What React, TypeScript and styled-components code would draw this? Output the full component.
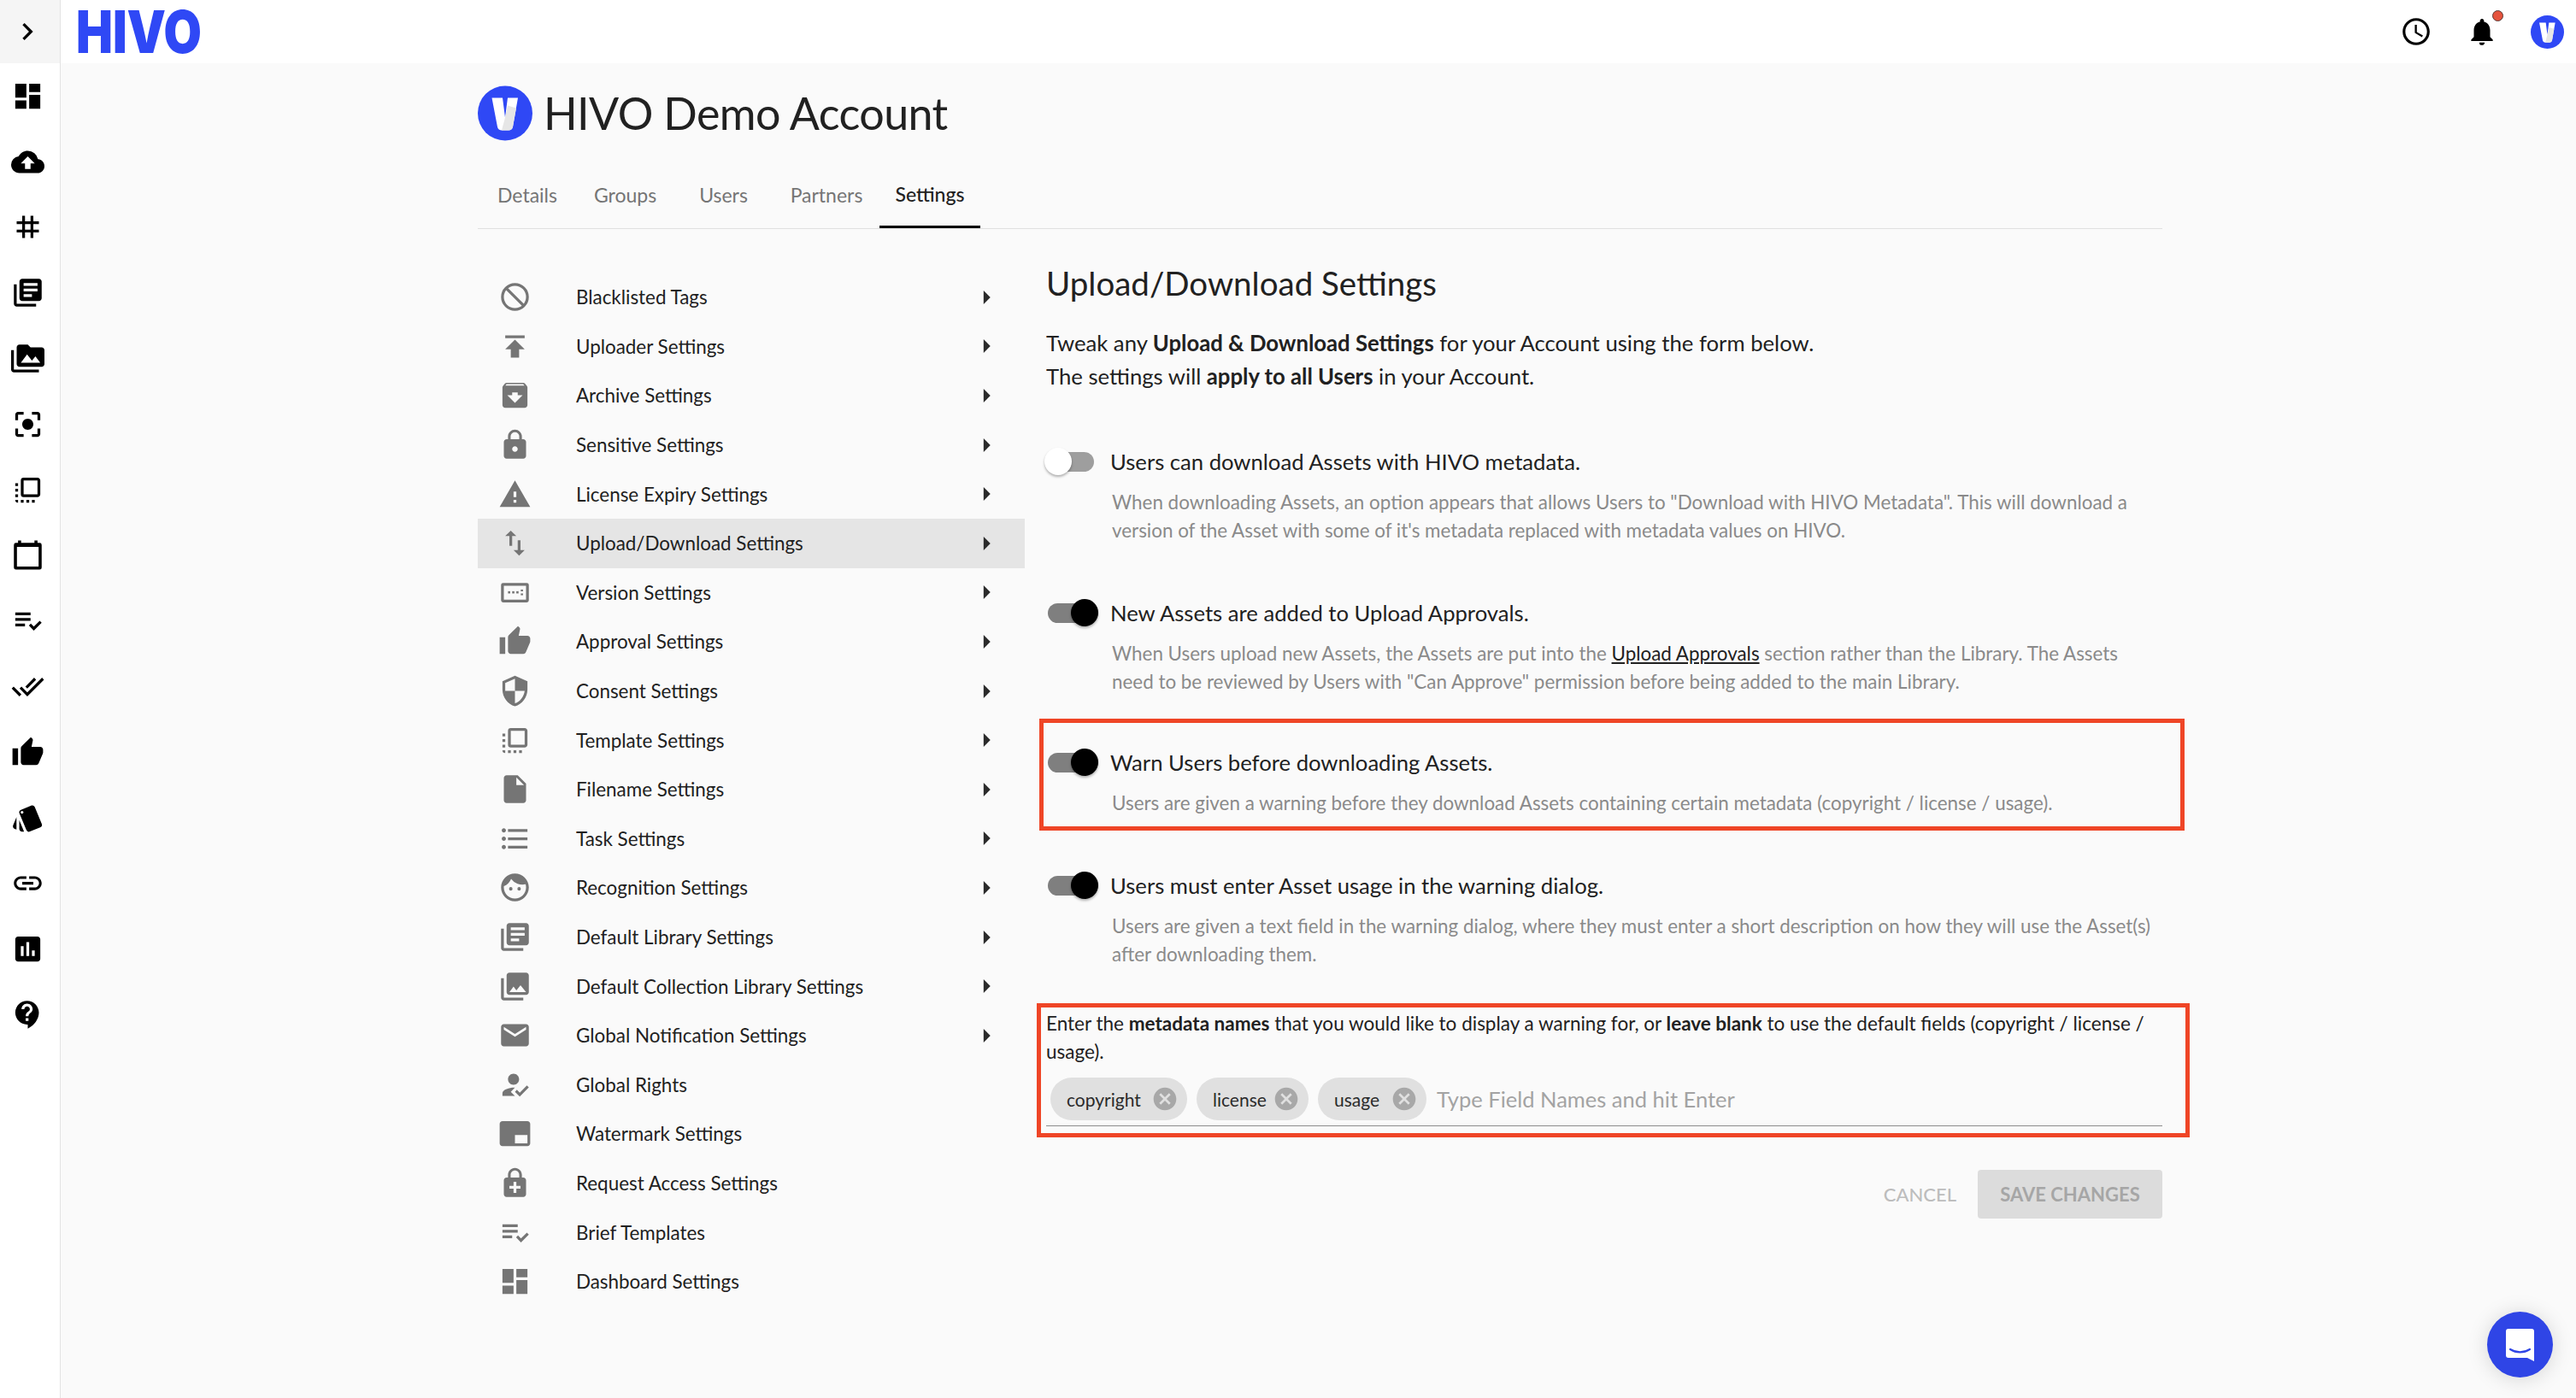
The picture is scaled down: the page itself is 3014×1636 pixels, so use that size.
import type { ComponentType } from "react";
import styled, { createGlobalStyle } from "styled-components";
import {
  MdAccessTime,
  MdArchive,
  MdArrowRight,
  MdAssessment,
  MdBrandingWatermark,
  MdCancel,
  MdChevronRight,
  MdCloudUpload,
  MdContactSupport,
  MdDashboard,
  MdDoneAll,
  MdEmail,
  MdEnhancedEncryption,
  MdFace,
  MdFlipToFront,
  MdFormatListBulleted,
  MdHowToReg,
  MdInsertDriveFile,
  MdLibraryBooks,
  MdLink,
  MdLock,
  MdNotifications,
  MdPermMedia,
  MdPhotoLibrary,
  MdPlaylistAddCheck,
  MdPublish,
  MdSecurity,
  MdStyle,
  MdSwapVert,
  MdTag,
  MdThumbUp,
  MdCenterFocusStrong,
  MdWarning,
} from "react-icons/md";

const FONT = `"Lato", "Open Sans", sans-serif`;

const GlobalStyle = createGlobalStyle`
  html, body {
    margin: 0;
    padding: 0;
    background: #fafafa;
    font-family: ${FONT};
    color: #212121;
  }
  * { box-sizing: border-box; }
`;

const BlockIcon = ({ size = 39 }: { size?: number }) => (
  <svg width={size} height={size} viewBox="0 0 24 24" fill="none" stroke="currentColor" strokeWidth="2">
    <circle cx="12" cy="12" r="9" />
    <path d="M5.600 5.600l12.800 12.800" />
  </svg>
);

const CalendarIcon = ({ size = 39 }: { size?: number }) => (
  <svg width={size} height={size} viewBox="0 0 24 24" fill="currentColor">
    <path d="M5 1.500h2.200v1.700h9.600V1.500H19v1.700h1.500A1.500 1.500 0 0 1 22 4.700v16.300a1.500 1.500 0 0 1-1.500 1.500h-17A1.500 1.500 0 0 1 2 21V4.700a1.500 1.500 0 0 1 1.500-1.500H5V1.500zM4.200 6.200v14.100h15.600V6.200H4.200z" />
  </svg>
);

const VersionIcon = ({ size = 39 }: { size?: number }) => (
  <svg width={size} height={size} viewBox="0 0 24 24" fill="currentColor">
    <path d="M3.500 5h17A1.500 1.500 0 0 1 22 6.500v11a1.500 1.500 0 0 1-1.500 1.500h-17A1.500 1.500 0 0 1 2 17.500v-11A1.500 1.500 0 0 1 3.500 5zM4 7v10h16V7H4z" />
    <rect x="7" y="11" width="1.600" height="1.600" />
    <rect x="10" y="11" width="1.600" height="1.600" />
    <rect x="13" y="11" width="1.600" height="1.600" />
    <rect x="16.200" y="9.800" width="1.600" height="1.300" />
    <rect x="16.200" y="12.600" width="1.600" height="1.300" />
  </svg>
);

const VMark = () => (
  <svg width="100%" height="100%" viewBox="0 0 64 64">
    <circle cx="32" cy="32" r="32" fill="#2f48f5" />
    <path d="M16.500 14H29l3 23 3-23h12l-6 34c-.5 2.500-2.500 4-5 4h-8c-2.500 0-4.500-1.500-5-4L16.500 14z" fill="#fff" />
    <path d="M32 37l3-14 10 3-4 22c-.5 2.500-2.500 4-5 4h-8L32 37z" fill="#e6e6e6" />
  </svg>
);

const ChatGlyph = () => (
  <svg width="33" height="38" viewBox="0 0 33 38">
    <path d="M3 0h27a3 3 0 0 1 3 3v35l-8-4H3a3 3 0 0 1-3-3V3a3 3 0 0 1 3-3z" fill="#fff" />
    <path d="M5 24c7 4.500 16 4.500 23 0" fill="none" stroke="#2f45e6" strokeWidth="2.200" strokeLinecap="round" />
  </svg>
);

type IconType = ComponentType<{ size?: number }>;

const railIcons: IconType[] = [
  MdDashboard,
  MdCloudUpload,
  MdTag,
  MdLibraryBooks,
  MdPermMedia,
  MdCenterFocusStrong,
  MdFlipToFront,
  CalendarIcon,
  MdPlaylistAddCheck,
  MdDoneAll,
  MdThumbUp,
  MdStyle,
  MdLink,
  MdAssessment,
  MdContactSupport,
];

const menuItems: { label: string; icon: IconType; arrow?: boolean; active?: boolean }[] = [
  { label: "Blacklisted Tags", icon: BlockIcon, arrow: true },
  { label: "Uploader Settings", icon: MdPublish, arrow: true },
  { label: "Archive Settings", icon: MdArchive, arrow: true },
  { label: "Sensitive Settings", icon: MdLock, arrow: true },
  { label: "License Expiry Settings", icon: MdWarning, arrow: true },
  { label: "Upload/Download Settings", icon: MdSwapVert, arrow: true, active: true },
  { label: "Version Settings", icon: VersionIcon, arrow: true },
  { label: "Approval Settings", icon: MdThumbUp, arrow: true },
  { label: "Consent Settings", icon: MdSecurity, arrow: true },
  { label: "Template Settings", icon: MdFlipToFront, arrow: true },
  { label: "Filename Settings", icon: MdInsertDriveFile, arrow: true },
  { label: "Task Settings", icon: MdFormatListBulleted, arrow: true },
  { label: "Recognition Settings", icon: MdFace, arrow: true },
  { label: "Default Library Settings", icon: MdLibraryBooks, arrow: true },
  { label: "Default Collection Library Settings", icon: MdPhotoLibrary, arrow: true },
  { label: "Global Notification Settings", icon: MdEmail, arrow: true },
  { label: "Global Rights", icon: MdHowToReg },
  { label: "Watermark Settings", icon: MdBrandingWatermark },
  { label: "Request Access Settings", icon: MdEnhancedEncryption },
  { label: "Brief Templates", icon: MdPlaylistAddCheck },
  { label: "Dashboard Settings", icon: MdDashboard },
];

const tabs = [
  { label: "Details", width: 116 },
  { label: "Groups", width: 113 },
  { label: "Users", width: 117 },
  { label: "Partners", width: 124 },
  { label: "Settings", width: 118, active: true },
];

const chips = [
  { label: "copyright", width: 160 },
  { label: "license", width: 131 },
  { label: "usage", width: 127 },
];

const Shell = styled.div`
  display: flex;
  min-height: 1636px;
`;

const Rail = styled.aside`
  width: 71px;
  flex: none;
  background: #fff;
  border-right: 1px solid #e3e3e3;
  display: flex;
  flex-direction: column;
`;

const RailToggle = styled.div`
  height: 74px;
  padding-right: 6px;
  background: #f5f5f5;
  display: flex;
  align-items: center;
  justify-content: center;
  color: #000;
`;

const RailItem = styled.div`
  height: 76.800px;
  padding-right: 6px;
  display: flex;
  align-items: center;
  justify-content: center;
  color: #000;
`;

const Main = styled.div`
  flex: 1;
  min-width: 0;
`;

const TopBar = styled.header`
  height: 74px;
  background: #fff;
  display: flex;
  align-items: center;
  justify-content: space-between;
  padding: 0 14px 0 18px;
`;

const Logo = styled.span`
  display: inline-block;
  font-family: "Inter", sans-serif;
  font-weight: 900;
  font-size: 69px;
  line-height: 74px;
  color: #2f48f5;
  transform: scaleX(0.83);
  transform-origin: left center;
`;

const TopActions = styled.div`
  display: flex;
  align-items: center;
  gap: 38px;
`;

const TopAction = styled.div`
  position: relative;
  width: 39px;
  height: 39px;
  display: flex;
  align-items: center;
  justify-content: center;
  color: #000;
`;

const NotifyDot = styled.span`
  position: absolute;
  top: -6px;
  right: -6px;
  width: 13px;
  height: 13px;
  border-radius: 50%;
  background: #e5533d;
  border: 1px solid #5a3a36;
`;

const Content = styled.main`
  width: 1971px;
  margin-left: 488px;
`;

const AccountHeader = styled.div`
  display: flex;
  align-items: center;
  gap: 13px;
  margin-top: 26px;
  height: 65px;
`;

const AccountAvatar = styled.div`
  width: 64px;
  height: 65px;
`;

const AccountName = styled.h1`
  margin: 0;
  font-size: 52px;
  font-weight: 400;
  letter-spacing: -0.6px;
  line-height: 65px;
  color: #212121;
`;

const TabBar = styled.nav`
  display: flex;
  height: 79px;
  margin-top: 24px;
  border-bottom: 1px solid #e0e0e0;
`;

const Tab = styled.div<{ $active?: boolean; $width: number }>`
  width: ${(p) => p.$width}px;
  height: 78px;
  display: flex;
  align-items: center;
  justify-content: center;
  font-size: 23px;
  font-weight: ${(p) => (p.$active ? 500 : 400)};
  color: ${(p) => (p.$active ? "#212121" : "#757575")};
  border-bottom: ${(p) => (p.$active ? "3px solid #000" : "0")};
`;

const Columns = styled.div`
  display: flex;
  gap: 25px;
  align-items: flex-start;
`;

const Menu = styled.ul`
  width: 640px;
  flex: none;
  list-style: none;
  margin: 51px 0 0;
  padding: 0;
`;

const MenuRow = styled.li<{ $active?: boolean }>`
  height: 57.600px;
  display: flex;
  align-items: center;
  background: ${(p) => (p.$active ? "#e5e5e5" : "transparent")};
  font-size: 22.400px;
  color: #212121;
`;

const MenuIcon = styled.span`
  width: 88px;
  padding-left: 24px;
  flex: none;
  display: flex;
  align-items: center;
  color: #757575;
`;

const MenuLabel = styled.span`
  flex: 1;
  margin-left: 27px;
`;

const MenuArrow = styled.span`
  display: flex;
  width: 38px;
  margin-right: 26px;
  color: #2b2b2b;
`;

const Panel = styled.section`
  flex: 1;
  min-width: 0;
`;

const PanelTitle = styled.h2`
  margin: 40px 0 0;
  font-size: 38.500px;
  font-weight: 400;
  line-height: 46px;
  color: #212121;
`;

const Intro = styled.p`
  margin: 28px 0 61px;
  font-size: 25.700px;
  line-height: 38.500px;
  color: #212121;
`;

const Setting = styled.div<{ $after: number }>`
  position: relative;
  margin-bottom: ${(p) => p.$after}px;
`;

const SettingHead = styled.div`
  display: flex;
  align-items: center;
  height: 40px;
  font-size: 25.650px;
  color: #212121;
`;

const Switch = styled.span<{ $on?: boolean }>`
  position: relative;
  flex: none;
  width: 54px;
  height: 23px;
  margin: 0 19px 0 2px;
  border-radius: 12px;
  background: ${(p) => (p.$on ? "#7f7f7f" : "#9e9e9e")};

  &::after {
    content: "";
    position: absolute;
    top: -4.500px;
    left: ${(p) => (p.$on ? "27px" : "-4px")};
    width: 32px;
    height: 32px;
    border-radius: 50%;
    background: ${(p) => (p.$on ? "#000" : "#fff")};
    box-shadow: 0 2px 3px rgba(0, 0, 0, 0.3);
  }
`;

const SettingNote = styled.p`
  margin: 11px 0 0 77px;
  font-size: 22.400px;
  line-height: 33px;
  color: #8a8a8a;

  a {
    color: #212121;
    text-decoration: underline;
  }
`;

const Annotation = styled.div<{ $top: number; $bottom: number; $left: number; $right: number }>`
  position: absolute;
  top: ${(p) => p.$top}px;
  bottom: ${(p) => p.$bottom}px;
  left: ${(p) => p.$left}px;
  right: ${(p) => p.$right}px;
  border: 5px solid #ef4526;
  pointer-events: none;
`;

const FieldBlock = styled.div`
  position: relative;
  margin-top: -10px;
`;

const FieldHint = styled.p`
  margin: 0;
  font-size: 22.500px;
  line-height: 33px;
  color: #212121;
`;

const ChipInput = styled.div`
  display: flex;
  align-items: center;
  padding: 14px 0 6px 5px;
  gap: 11px;
  border-bottom: 1px solid #8c8c8c;
`;

const Chip = styled.span<{ $width: number }>`
  display: inline-flex;
  align-items: center;
  justify-content: space-between;
  width: ${(p) => p.$width}px;
  height: 50px;
  padding: 0 10px 0 19px;
  border-radius: 25px;
  background: #e0e0e0;
  font-size: 21px;
  color: #2b2b2b;
`;

const ChipClose = styled.span`
  display: flex;
  color: #a8a8a8;
`;

const Placeholder = styled.span`
  margin-left: 1px;
  font-size: 25.500px;
  color: #a3a3a3;
`;

const Actions = styled.div`
  display: flex;
  justify-content: flex-end;
  align-items: center;
  gap: 25px;
  margin-top: 51px;
`;

const CancelButton = styled.span`
  font-size: 22px;
  font-weight: 500;
  color: #bdbdbd;
`;

const SaveButton = styled.span`
  display: flex;
  align-items: center;
  justify-content: center;
  width: 216px;
  height: 57px;
  border-radius: 4px;
  background: #dcdcdc;
  font-size: 22px;
  font-weight: 700;
  color: #a6a6a6;
`;

const ChatBubble = styled.div`
  position: fixed;
  right: 27px;
  bottom: 24px;
  width: 77px;
  height: 77px;
  border-radius: 50%;
  background: #2f45e6;
  display: flex;
  align-items: center;
  justify-content: center;
  box-shadow: 0 2px 24px rgba(0, 0, 0, 0.15);
`;

export default function App() {
  return (
    <>
      <GlobalStyle />
      <Shell>
        <Rail>
          <RailToggle>
            <MdChevronRight size={40} />
          </RailToggle>
          {railIcons.map((Icon, i) => (
            <RailItem key={i}>
              <Icon size={39} />
            </RailItem>
          ))}
        </Rail>
        <Main>
          <TopBar>
            <Logo>HIVO</Logo>
            <TopActions>
              <TopAction>
                <MdAccessTime size={38} />
              </TopAction>
              <TopAction>
                <MdNotifications size={38} />
                <NotifyDot />
              </TopAction>
              <TopAction>
                <VMark />
              </TopAction>
            </TopActions>
          </TopBar>
          <Content>
            <AccountHeader>
              <AccountAvatar>
                <VMark />
              </AccountAvatar>
              <AccountName>HIVO Demo Account</AccountName>
            </AccountHeader>
            <TabBar>
              {tabs.map((t) => (
                <Tab key={t.label} $active={t.active} $width={t.width}>
                  {t.label}
                </Tab>
              ))}
            </TabBar>
            <Columns>
              <Menu>
                {menuItems.map(({ label, icon: Icon, arrow, active }) => (
                  <MenuRow key={label} $active={active}>
                    <MenuIcon>
                      <Icon size={39} />
                    </MenuIcon>
                    <MenuLabel>{label}</MenuLabel>
                    {arrow && (
                      <MenuArrow>
                        <MdArrowRight size={38} />
                      </MenuArrow>
                    )}
                  </MenuRow>
                ))}
              </Menu>
              <Panel>
                <PanelTitle>Upload/Download Settings</PanelTitle>
                <Intro>
                  Tweak any <strong>Upload &amp; Download Settings</strong> for your Account using the form below.
                  <br />
                  The settings will <strong>apply to all Users</strong> in your Account.
                </Intro>
                <Setting $after={60}>
                  <SettingHead>
                    <Switch />
                    Users can download Assets with HIVO metadata.
                  </SettingHead>
                  <SettingNote>
                    When downloading Assets, an option appears that allows Users to "Download with HIVO Metadata". This
                    will download a version of the Asset with some of it's metadata replaced with metadata values on
                    HIVO.
                  </SettingNote>
                </Setting>
                <Setting $after={58}>
                  <SettingHead>
                    <Switch $on />
                    New Assets are added to Upload Approvals.
                  </SettingHead>
                  <SettingNote>
                    When Users upload new Assets, the Assets are put into the <a>Upload Approvals</a> section rather
                    than the Library. The Assets
                    <br />
                    need to be reviewed by Users with "Can Approve" permission before being added to the main Library.
                  </SettingNote>
                </Setting>
                <Setting $after={60}>
                  <SettingHead>
                    <Switch $on />
                    Warn Users before downloading Assets.
                  </SettingHead>
                  <SettingNote>
                    Users are given a warning before they download Assets containing certain metadata (copyright /
                    license / usage).
                  </SettingNote>
                  <Annotation $top={-31} $bottom={-16} $left={-8} $right={-26} />
                </Setting>
                <Setting $after={58}>
                  <SettingHead>
                    <Switch $on />
                    Users must enter Asset usage in the warning dialog.
                  </SettingHead>
                  <SettingNote>
                    Users are given a text field in the warning dialog, where they must enter a short description on
                    how they will use the Asset(s) after downloading them.
                  </SettingNote>
                </Setting>
                <FieldBlock>
                  <FieldHint>
                    Enter the <strong>metadata names</strong> that you would like to display a warning for, or{" "}
                    <strong>leave blank</strong> to use the default fields (copyright / license /
                    <br />
                    usage).
                  </FieldHint>
                  <ChipInput>
                    {chips.map((c) => (
                      <Chip key={c.label} $width={c.width}>
                        {c.label}
                        <ChipClose>
                          <MdCancel size={32} />
                        </ChipClose>
                      </Chip>
                    ))}
                    <Placeholder>Type Field Names and hit Enter</Placeholder>
                  </ChipInput>
                  <Annotation $top={-7} $bottom={-13} $left={-11} $right={-32} />
                </FieldBlock>
                <Actions>
                  <CancelButton>CANCEL</CancelButton>
                  <SaveButton>SAVE CHANGES</SaveButton>
                </Actions>
              </Panel>
            </Columns>
          </Content>
        </Main>
      </Shell>
      <ChatBubble>
        <ChatGlyph />
      </ChatBubble>
    </>
  );
}
